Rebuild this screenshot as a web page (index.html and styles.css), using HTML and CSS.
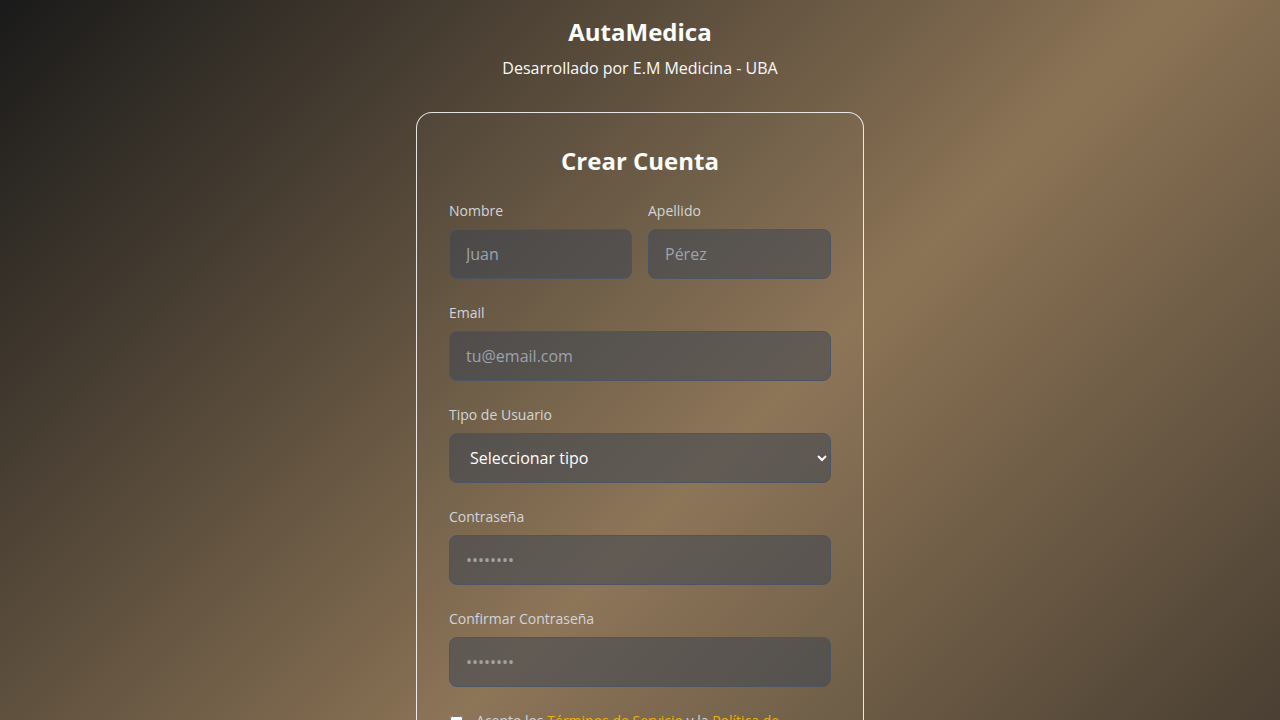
FILE: index.html
```html
<!DOCTYPE html>
<html lang="es">
<head>
<meta charset="utf-8">
<title>AutaMedica - Crear Cuenta</title>
<link rel="stylesheet" href="styles.css">
</head>
<body>
<main class="page">
  <header class="brand">
    <h1 class="brand-title">AutaMedica</h1>
    <p class="brand-sub">Desarrollado por E.M Medicina - UBA</p>
  </header>
  <section class="card">
    <h2 class="card-title">Crear Cuenta</h2>
    <form class="form">
      <div class="row">
        <div class="field">
          <label class="label">Nombre</label>
          <input class="input" type="text" placeholder="Juan">
        </div>
        <div class="field">
          <label class="label">Apellido</label>
          <input class="input" type="text" placeholder="Pérez">
        </div>
      </div>
      <div class="field">
        <label class="label">Email</label>
        <input class="input" type="email" placeholder="tu@email.com">
      </div>
      <div class="field">
        <label class="label">Tipo de Usuario</label>
        <select class="input select">
          <option>Seleccionar tipo</option>
          <option>Paciente</option>
          <option>Médico</option>
        </select>
      </div>
      <div class="field">
        <label class="label">Contraseña</label>
        <input class="input" type="password" placeholder="••••••••">
      </div>
      <div class="field">
        <label class="label">Confirmar Contraseña</label>
        <input class="input" type="password" placeholder="••••••••">
      </div>
      <label class="terms">
        <input class="check" type="checkbox">
        <span>Acepto los <a class="link" href="#">Términos de Servicio</a> y la <a class="link" href="#">Política de Privacidad</a></span>
      </label>
      <button class="submit" type="button">Crear Cuenta</button>
      <p class="switch">¿Ya tienes cuenta? <a class="link" href="#">Iniciar Sesión</a></p>
    </form>
  </section>
</main>
</body>
</html>
```

FILE: styles.css
```css
* { box-sizing: border-box; }
html, body { margin: 0; padding: 0; }
body {
  min-height: 100vh;
  font-family: "Open Sans", "Noto Sans", sans-serif;
  color: #fff;
  background-color: #2e2924;
  background-image: linear-gradient(135deg, #1a1a1a 0%, #8b7355 50%, #2e2924 100%);
  background-size: 100% 1070px;
  background-repeat: no-repeat;
}
.page {
  display: flex;
  flex-direction: column;
  align-items: center;
  padding: 16px 16px 48px;
}
.brand { text-align: center; }
.brand-title {
  margin: 0;
  font-size: 24px;
  line-height: 32px;
  font-weight: 700;
  color: #fff;
}
.brand-sub {
  margin: 8px 0 0;
  font-size: 16px;
  line-height: 24px;
  color: #f9fafb;
}
.card {
  margin-top: 32px;
  width: 448px;
  padding: 32px;
  border: 1px solid rgba(255, 255, 255, 0.85);
  border-radius: 16px;
  background: rgba(255, 255, 255, 0.02);
}
.card-title {
  margin: 0 0 24px;
  text-align: center;
  font-size: 24px;
  line-height: 32px;
  font-weight: 700;
}
.form {
  display: flex;
  flex-direction: column;
  gap: 24px;
}
.row {
  display: grid;
  grid-template-columns: 1fr 1fr;
  gap: 16px;
}
.field { display: flex; flex-direction: column; }
.label {
  font-size: 14px;
  line-height: 20px;
  color: #d1d5db;
  margin-bottom: 8px;
}
.input {
  width: 100%;
  height: 50px;
  padding: 12px 16px;
  font-family: inherit;
  font-size: 16px;
  line-height: 24px;
  color: #fff;
  background: rgba(55, 65, 81, 0.5);
  border: 1px solid #4b5563;
  border-radius: 8px;
  outline: none;
}
.input::placeholder { color: #9ca3af; }
.select {
  padding-left: 16px;
  color-scheme: dark;
}
.select option { background: #374151; color: #fff; }
.terms {
  display: flex;
  align-items: flex-start;
  gap: 13px;
  font-size: 14px;
  line-height: 20px;
  color: #d1d5db;
}
.check {
  width: 13px;
  height: 13px;
  margin: 5px 0 0 1px;
  flex: none;
}
.link { color: #eab308; text-decoration: none; }
.submit {
  height: 48px;
  border: none;
  border-radius: 8px;
  background: #eab308;
  color: #1f2937;
  font-family: inherit;
  font-size: 16px;
  font-weight: 600;
}
.switch {
  margin: 0;
  text-align: center;
  font-size: 14px;
  line-height: 20px;
  color: #d1d5db;
}
```
